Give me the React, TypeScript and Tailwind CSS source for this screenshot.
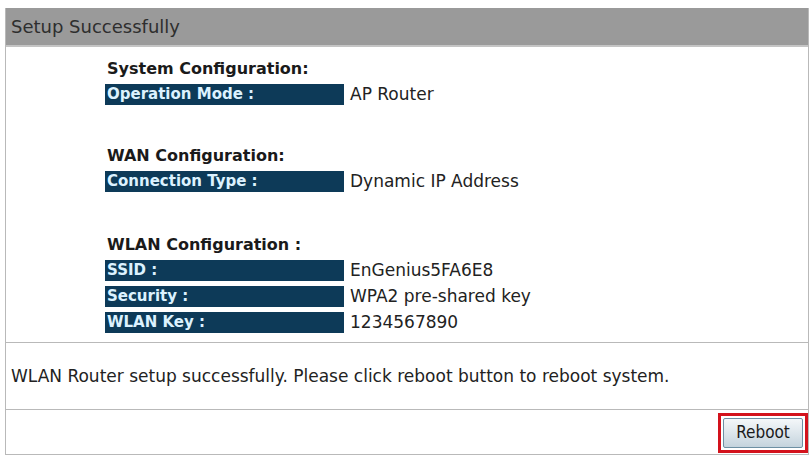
import React from "react";

const font = { fontFamily: '"DejaVu Sans", "Liberation Sans", sans-serif' };
const narrow = { fontFamily: '"DejaVu Sans Condensed", "DejaVu Sans", sans-serif' };

type Row = { label: string; value: string };

function Section({ title, rows, gap }: { title: string; rows: Row[]; gap: string }) {
  return (
    <div className={gap}>
      <div className="h-[27px] pt-[2px] pl-[2px] text-[16px] font-bold text-[#1a1a1a] leading-[20px]">
        {title}
      </div>
      <div className="flex flex-col gap-[5px]">
        {rows.map((r) => (
          <div key={r.label} className="flex items-center h-[21px]">
            <div className="w-[239px] h-[21px] bg-[#0d3a58] text-[#dcf2ff] font-bold text-[15px] leading-[21px] pl-[2px]">
              {r.label}
            </div>
            <div className="pl-[6px] text-[17px] text-[#222] leading-[21px]">{r.value}</div>
          </div>
        ))}
      </div>
    </div>
  );
}

export default function App() {
  return (
    <div className="w-[812px] h-[457px] bg-white pt-[8px] pl-[5px]" style={font}>
      <div className="w-[804px] border-x border-[#b9b9b9] border-b">
        {/* title bar */}
        <div className="h-[39px] bg-[#9a9a9a] border-b-[2px] border-[#c4c4c4] flex items-center pl-[5px] text-[18px] text-[#2e2e2e]">
          Setup Successfully
        </div>

        {/* configuration summary */}
        <div className="h-[296px] pl-[99px] pt-[10px] border-b border-[#b9b9b9]">
          <Section title="System Configuration:" gap="" rows={[{ label: "Operation Mode :", value: "AP Router" }]} />
          <Section title="WAN Configuration:" gap="mt-[39px]" rows={[{ label: "Connection Type :", value: "Dynamic IP Address" }]} />
          <Section
            title="WLAN Configuration :"
            gap="mt-[41px]"
            rows={[
              { label: "SSID :", value: "EnGenius5FA6E8" },
              { label: "Security :", value: "WPA2 pre-shared key" },
              { label: "WLAN Key :", value: "1234567890" },
            ]}
          />
        </div>

        {/* status message */}
        <div className="h-[67px] flex items-center pl-[5px] pt-[2px] text-[17px] text-[#222] border-b border-[#b9b9b9]">
          WLAN Router setup successfully. Please click reboot button to reboot system.
        </div>

        {/* actions */}
        <div className="h-[44px] flex items-center justify-end">
          <div className="border-[3px] border-[#d3121c] p-[2px] mt-[2px]">
            <button
              className="w-[80px] h-[30px] rounded-[2px] border border-[#6d8fa3] text-[17px] text-[#1a1a1a] bg-gradient-to-b from-[#f4f7f9] via-[#dde6ec] to-[#c4d3dd]"
              style={narrow}
            >
              Reboot
            </button>
          </div>
        </div>
      </div>
    </div>
  );
}
